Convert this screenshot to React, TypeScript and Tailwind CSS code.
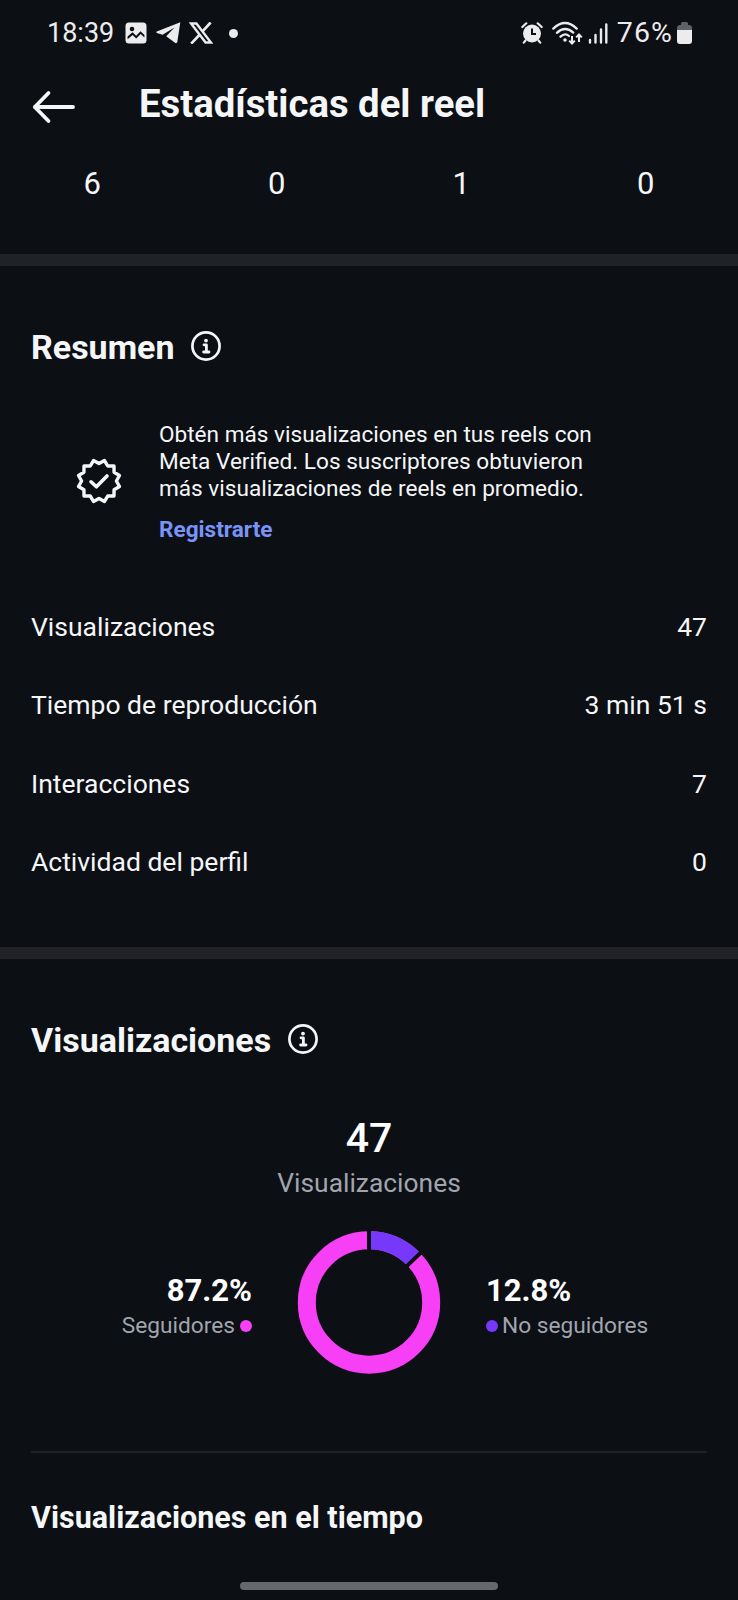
import type { ReactNode } from 'react';

const counters = [6, 0, 1, 0];

const summary = [
  { label: 'Visualizaciones', value: '47' },
  { label: 'Tiempo de reproducción', value: '3 min 51 s' },
  { label: 'Interacciones', value: '7' },
  { label: 'Actividad del perfil', value: '0' },
];

function StatusBar() {
  return (
    <div className="flex h-[66px] items-center justify-between pl-[47px] pr-[46px] text-[27px] text-[#ececee]">
      <div className="flex items-center">
        <span className="w-[78px]">18:39</span>
        <svg className="h-[22px] w-[22px]" viewBox="0 0 22 22">
          <rect x="0.5" y="0.5" width="21" height="21" rx="3.5" fill="#ececee" />
          <circle cx="7" cy="7" r="2.3" fill="#0c0f14" />
          <path d="M2.6 14.5 L7.5 10.2 L11.2 13.8 L15.5 9.2 L19.4 13 V15.4 L15.7 11.9 L11.2 16.6 L7.6 13 L2.6 17.2Z" fill="#0c0f14" />
        </svg>
        <svg className="ml-[9px] h-[22px] w-[25px]" viewBox="0 0 25 22">
          <path d="M24.3 0.3 L0.8 9.6 Q-0.3 10.3 0.9 11 L6.6 12.8 L18.5 5.4 L10.2 14.3 L19.3 21 Q20.8 21.6 21.3 20Z" fill="#ececee" />
        </svg>
        <svg className="ml-[8px] h-[22px] w-[24px]" viewBox="0 0 24 22">
          <path d="M2 1.4 H7.4 L22 20.6 H16.6Z" fill="none" stroke="#ececee" strokeWidth="2.5" />
          <path d="M21.6 0.5 L13.3 9.7 M10.6 12.7 L2.2 21.6" stroke="#ececee" strokeWidth="2.7" />
        </svg>
        <span className="ml-[16px] h-[9px] w-[9px] rounded-full bg-[#ececee]" />
      </div>
      <div className="flex items-center">
        <svg className="h-[22px] w-[22px]" viewBox="0 0 22 22">
          <circle cx="11" cy="11.5" r="9" fill="#ececee" />
          <path d="M1.3 5 L5.3 1.3 M20.7 5 L16.7 1.3 M4.5 18.5 L2.8 20.6 M17.5 18.5 L19.2 20.6" stroke="#ececee" strokeWidth="2.2" strokeLinecap="round" />
          <path d="M11 6.5 V12 H15" fill="none" stroke="#0c0f14" strokeWidth="2" />
        </svg>
        <svg className="ml-[9px] h-[24px] w-[31px]" viewBox="0 0 31 24">
          <g fill="none" stroke="#ececee" strokeWidth="2.3" strokeLinecap="round">
            <path d="M1.3 7.6 Q13 -3.5 24.7 7.6" />
            <path d="M4.9 11.8 Q13 4.2 21.3 11.6" />
            <path d="M8.5 15.7 Q13 11.5 17 15" />
          </g>
          <circle cx="13" cy="19" r="1.8" fill="#ececee" />
          <path d="M20 15 V22 M17.2 19.6 L20 22.5 L22.8 19.6 M27 21 V14 M24.2 16.4 L27 13.5 L29.8 16.4" fill="none" stroke="#ececee" strokeWidth="2" />
        </svg>
        <svg className="ml-[5px] h-[21px] w-[20px]" viewBox="0 0 20 21">
          <path d="M2 17 V19.5 M7.5 12 V19.5 M13 6.5 V19.5 M18.3 1.5 V19.5" stroke="#ececee" strokeWidth="2.4" strokeLinecap="round" />
        </svg>
        <span className="ml-[9px] text-[28.5px] tracking-[1.1px]">76%</span>
        <svg className="ml-[4px] h-[22px] w-[15px]" viewBox="0 0 15 22">
          <path d="M0 8 V6 Q0 3 3 3 H4 V1.5 Q4 0 5.5 0 H9.5 Q11 0 11 1.5 V3 H12 Q15 3 15 6 V8Z" fill="#606266" />
          <path d="M0 8 H15 V19 Q15 22 12 22 H3 Q0 22 0 19Z" fill="#ececee" />
        </svg>
      </div>
    </div>
  );
}

function InfoIcon() {
  return (
    <svg className="h-[30px] w-[30px]" viewBox="0 0 30 30" fill="none" stroke="#f5f6f8">
      <circle cx="15" cy="15" r="13.6" strokeWidth="2.7" />
      <circle cx="15" cy="9.6" r="1.9" fill="#f5f6f8" stroke="none" />
      <path d="M13 13.8 H15.4 V20.8 M12.6 21 H18" strokeWidth="2.8" strokeLinecap="round" strokeLinejoin="round" />
    </svg>
  );
}

// 12-pointed rosette with a check inside
function VerifiedIcon() {
  const points = Array.from({ length: 24 }, (_, i) => {
    const r = i % 2 === 0 ? 21.2 : 17.4;
    const a = (Math.PI * 2 * (i + 1)) / 24;
    return `${23 + r * Math.sin(a)},${23 + r * Math.cos(a)}`;
  }).join(' ');
  return (
    <svg className="h-[46px] w-[46px]" viewBox="0 0 46 46" fill="none" stroke="#f5f6f8" strokeLinecap="round" strokeLinejoin="round">
      <polygon points={points} strokeWidth="3.4" />
      <path d="M15 23.8 L20.4 28.8 L31 18" strokeWidth="3.6" />
    </svg>
  );
}

function Donut({ percent }: { percent: number }) {
  const angle = (percent / 100) * Math.PI * 2;
  const r = 62.2;
  const x = 72 + r * Math.sin(angle);
  const y = 71.5 - r * Math.cos(angle);
  return (
    <svg className="h-[143px] w-[144px]" viewBox="0 0 144 143" fill="none">
      <circle cx="72" cy="71.5" r={r} stroke="#f73ff5" strokeWidth="18" />
      <path d={`M72 ${71.5 - r} A${r} ${r} 0 0 1 ${x} ${y}`} stroke="#7638fa" strokeWidth="18" />
      <path
        d={`M72 20 V0 M${72 + 50 * Math.sin(angle)} ${71.5 - 50 * Math.cos(angle)} L${72 + 73 * Math.sin(angle)} ${71.5 - 73 * Math.cos(angle)}`}
        stroke="#0c0f14"
        strokeWidth="4"
      />
    </svg>
  );
}

function SectionTitle({ children }: { children: ReactNode }) {
  return (
    <div className="flex h-10 items-center gap-[16.5px]">
      <h2 className="text-[34px] font-bold leading-10">{children}</h2>
      <div className="-mt-[3px]">
        <InfoIcon />
      </div>
    </div>
  );
}

export default function App() {
  return (
    <div className="flex h-[1600px] w-[738px] flex-col overflow-hidden bg-[#0c0f14] font-['Roboto',sans-serif] text-[#f5f6f8]">
      <StatusBar />

      <header className="flex h-[76px] items-center pl-[32px]">
        <svg className="mt-[5px] h-[34px] w-[44px]" viewBox="0 0 44 34" fill="none" stroke="#f5f6f8" strokeWidth="3.8" strokeLinecap="round" strokeLinejoin="round">
          <path d="M41 17 H2.8 M16.5 3 L2.8 17 L16.5 31" />
        </svg>
        <h1 className="ml-[63px] text-[38.3px] font-bold leading-[44px]">Estadísticas del reel</h1>
      </header>

      <div className="grid h-[112px] grid-cols-4 pt-[22px] text-center text-[31px] leading-10">
        {counters.map((count, i) => (
          <span key={i}>{count}</span>
        ))}
      </div>

      <div className="h-3 shrink-0 bg-[#212227]" />

      <section className="h-[681px] px-[31px] pt-[61px]">
        <SectionTitle>Resumen</SectionTitle>

        <div className="mt-[55px] flex items-center pl-[45px]">
          <div className="-mt-[4px]">
            <VerifiedIcon />
          </div>
          <div className="ml-[37px] text-[22.6px] leading-[26.8px]">
            <p className="w-[450px]">
              Obtén más visualizaciones en tus reels con
              <br />
              Meta Verified. Los suscriptores obtuvieron
              <br />
              más visualizaciones de reels en promedio.
            </p>
            <a className="mt-[15px] block font-bold text-[#7a93f8]">Registrarte</a>
          </div>
        </div>

        <div className="mt-[43px] text-[26.5px]">
          {summary.map((row) => (
            <div key={row.label} className="flex h-[78.6px] items-center justify-between">
              <span>{row.label}</span>
              <span>{row.value}</span>
            </div>
          ))}
        </div>
      </section>

      <div className="h-3 shrink-0 bg-[#212227]" />

      <section className="px-[31px] pt-[61px]">
        <SectionTitle>Visualizaciones</SectionTitle>

        <div className="mt-[54px] text-center">
          <div className="text-[41px] font-medium leading-[48px] text-white">47</div>
          <div className="mt-[3px] text-[26.4px] leading-9 text-[#a0a5af]">Visualizaciones</div>
        </div>

        <div className="mt-[30px] flex items-center">
          <div className="mt-[9px] flex w-[221px] flex-col items-end">
            <div className="text-[31px] font-bold leading-[37px] text-white">87.2%</div>
            <div className="flex items-center gap-[5px] text-[22.7px] leading-[34px] text-[#a0a5af]">
              Seguidores
              <span className="h-3 w-3 rounded-full bg-[#f73ff5]" />
            </div>
          </div>
          <div className="ml-[45px]">
            <Donut percent={12.8} />
          </div>
          <div className="ml-[45px] mt-[9px]">
            <div className="text-[31px] font-bold leading-[37px] text-white">12.8%</div>
            <div className="flex items-center gap-[4px] text-[22.7px] leading-[34px] text-[#a0a5af]">
              <span className="h-3 w-3 rounded-full bg-[#7638fa]" />
              No seguidores
            </div>
          </div>
        </div>

        <div className="mt-[77px] h-[2px] bg-[#212227]" />

        <h3 className="mt-[45px] text-[30.5px] font-bold leading-10">Visualizaciones en el tiempo</h3>
      </section>

      <div className="mx-auto mb-[10px] mt-auto h-2 w-[258px] shrink-0 rounded-full bg-[#66686c]" />
    </div>
  );
}
